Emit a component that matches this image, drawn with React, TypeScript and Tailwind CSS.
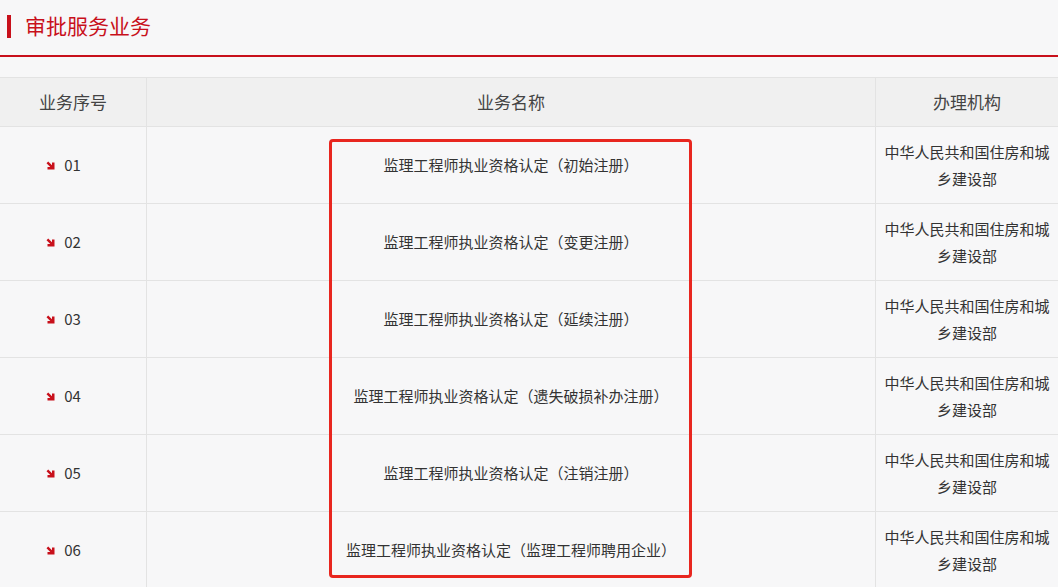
const rows = [
  { no: '01', name: '监理工程师执业资格认定（初始注册）' },
  { no: '02', name: '监理工程师执业资格认定（变更注册）' },
  { no: '03', name: '监理工程师执业资格认定（延续注册）' },
  { no: '04', name: '监理工程师执业资格认定（遗失破损补办注册）' },
  { no: '05', name: '监理工程师执业资格认定（注销注册）' },
  { no: '06', name: '监理工程师执业资格认定（监理工程师聘用企业）' },
];

const Arrow = () => (
  <svg width="9" height="9" viewBox="0 0 9 9" className="mr-[9px]">
    <path d="M0.5 2.2 L2.2 0.5 L6 4.3 L6 1.5 L8.5 1.5 L8.5 8.5 L1.5 8.5 L1.5 6 L4.3 6 Z" fill="#c8101b" />
  </svg>
);

export default function App() {
  return (
    <div
      className="relative w-[1058px] h-[587px] overflow-hidden bg-[#f7f7f8] text-[#333]"
      style={{ fontFamily: '"Noto Sans CJK SC", "Noto Sans", sans-serif' }}
    >
      <div className="flex items-center h-[57px] pl-[7px] pb-[2px] border-b-2 border-[#c8101b]">
        <span className="w-[4px] h-[23px] bg-[#c8101b] mr-[14px]" />
        <h1 className="text-[21px] text-[#c8101b] leading-none -mt-[2px]">审批服务业务</h1>
      </div>

      <div className="mt-[20px] border-t border-[#e3e3e3]">
        <div className="grid grid-cols-[147px_729px_1fr] h-[49px] bg-[#f0f0f0] border-b border-[#e3e3e3] text-[17px] text-[#444]">
          <div className="flex items-center justify-center border-r border-[#e3e3e3]">业务序号</div>
          <div className="flex items-center justify-center border-r border-[#e3e3e3]">业务名称</div>
          <div className="flex items-center justify-center">办理机构</div>
        </div>
        {rows.map((r) => (
          <div
            key={r.no}
            className="grid grid-cols-[147px_729px_1fr] h-[77px] border-b border-[#e3e3e3] text-[15px] text-[#333]"
          >
            <div className="flex items-center justify-center border-r border-[#e3e3e3] pr-[19px]">
              <Arrow />
              <span>{r.no}</span>
            </div>
            <div className="flex items-center justify-center border-r border-[#e3e3e3]">{r.name}</div>
            <div className="flex items-center justify-center text-center leading-[27px] px-[8px]">
              中华人民共和国住房和城乡建设部
            </div>
          </div>
        ))}
      </div>

      <div className="absolute left-[329px] top-[139px] w-[363px] h-[439px] border-[3px] border-[#e8261f] rounded-[4px]" />
    </div>
  );
}
